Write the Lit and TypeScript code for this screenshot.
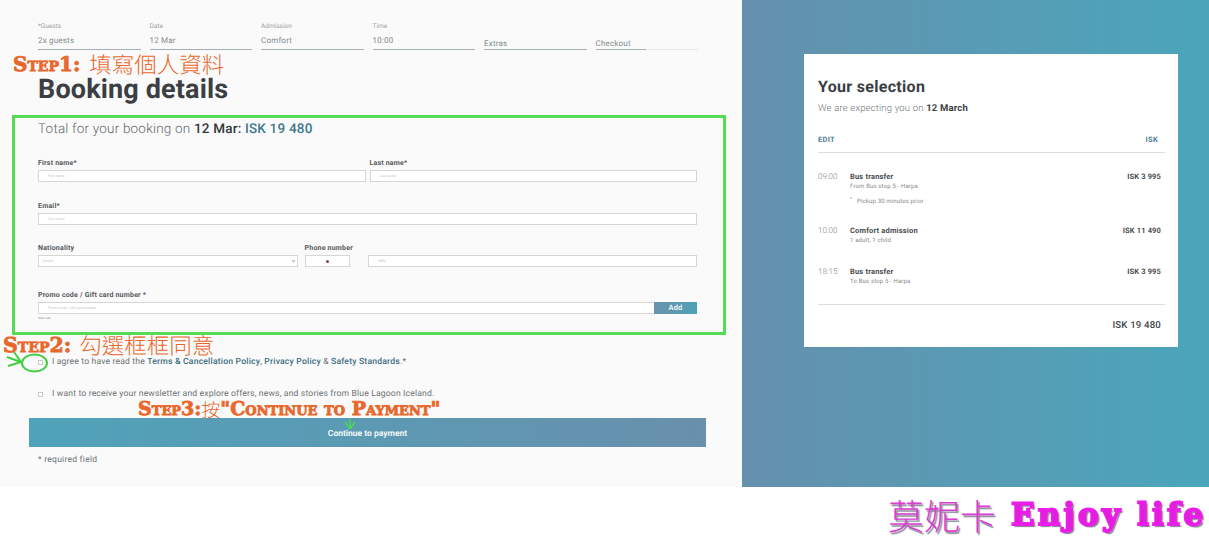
import { LitElement, html, css } from "lit";
import { customElement } from "lit/decorators.js";

const STEPS = [
  { label: "*Guests", value: "2x guests" },
  { label: "Date", value: "12 Mar" },
  { label: "Admission", value: "Comfort" },
  { label: "Time", value: "10:00" },
];

const ITEMS = [
  { time: "09:00", name: "Bus transfer", sub: "From Bus stop 5 - Harpa", note: "Pickup 30 minutes prior", price: "ISK 3 995", gap: "g1" },
  { time: "10:00", name: "Comfort admission", sub: "1 adult, 1 child", note: "", price: "ISK 11 490", gap: "g2" },
  { time: "18:15", name: "Bus transfer", sub: "To Bus stop 5 - Harpa", note: "", price: "ISK 3 995", gap: "g3" },
];

@customElement("app-root")
export class AppRoot extends LitElement {
  static styles = css`
    :host { display: block; width: 1209px; height: 541px; overflow: hidden; background: #fff; position: relative;
      font-family: Roboto, "Noto Sans", sans-serif; color: #3c4145; text-rendering: geometricPrecision; }
    * { box-sizing: border-box; }
    .top { display: flex; height: 487px; }
    .main { width: 742px; background: #fafafa; display: flex; flex-direction: column; }
    .steps { display: flex; gap: 9px; margin: 0 0 0 38px; padding-top: 23px; height: 50px; width: 660px; }
    .step { flex: 1; border-bottom: 1px solid #a3afb4; display: flex; flex-direction: column; justify-content: flex-end; position: relative; }
    .step .l { font-size: 6.5px; color: #9aa0a3; line-height: 8px; margin-bottom: 6px; }
    .step .v { font-size: 8px; color: #7f8a8e; line-height: 10px; margin-bottom: 3px; letter-spacing: .2px; }
    .step.t .v { margin-bottom: 0; }
    .step.last { border-bottom-color: #e6e8e9; }
    .step.last::after { content: ""; position: absolute; left: 0; bottom: -1px; width: 50px; height: 1px; background: #a3afb4; }
    h1 { font-size: 27px; font-weight: 700; color: #3b3f43; margin: 24px 0 0 38px; line-height: 30px; letter-spacing: .15px; height: 41px; }
    .box { margin-left: 12px; width: 714px; height: 220px; border: 3px solid #55dc55; padding: 0 26px 0 23px; display: flex; flex-direction: column; }
    .total { font-size: 13.5px; font-weight: 300; color: #62686c; line-height: 18px; margin-top: 2px; letter-spacing: .2px; }
    .total b { font-weight: 500; color: #33383c; }
    .total b.c { color: #40788c; }
    .row { display: flex; }
    .lbl { font-size: 7px; font-weight: 700; color: #55595c; line-height: 9px; letter-spacing: .2px; height: 9px; white-space: nowrap; }
    .inp { height: 12px; background: #fff; border: 1px solid #d6d6d6; font-size: 3.5px; color: #c4c4c4; line-height: 10px; padding-left: 9px; display: block; }
    .f { display: flex; flex-direction: column; gap: 2px; }
    .r1 { margin-top: 21px; gap: 4px; }
    .r1 .f { flex: 1; }
    .r2 { margin-top: 20px; }
    .r2 .f { width: 660px; }
    .r3 { margin-top: 19px; align-items: flex-end; }
    .nat { width: 260px; margin-right: 7px; }
    .nat .inp { position: relative; padding-left: 3px; }
    .nat .inp i { position: absolute; right: 2px; top: 3px; width: 3px; height: 3px; border-right: 1px solid #999; border-bottom: 1px solid #999; transform: rotate(45deg) scale(.8); }
    .ph { width: 45px; margin-right: 18px; }
    .ph .inp { display: flex; justify-content: center; align-items: center; padding: 0; }
    .ph .inp i { width: 3px; height: 3px; background: #8c3c54; border-radius: 50%; }
    .tel { width: 330px; }
    .tel .inp { padding-left: 9px; }
    .r4 { margin-top: 24px; }
    .r4 .f { width: 660px; gap: 2px; }
    .promo { display: flex; }
    .promo .inp { flex: 1; border-right: 0; }
    .add { width: 43px; height: 12px; background: linear-gradient(90deg, #6a92ad, #4fa2b6); color: #e8f2f5; font-size: 7.5px; font-weight: 700; text-align: center; line-height: 12px; letter-spacing: .2px; }
    .tiny { font-size: 3px; color: #888; line-height: 4px; height: 4px; }
    .check { display: flex; align-items: center; margin-left: 38px; font-size: 8.6px; color: #6d7276; height: 12px; letter-spacing: .16px; gap: 9px; white-space: nowrap; }
    .check i { width: 5px; height: 5px; border: 1px solid #c9c9c9; background: #fff; display: block; }
    .check b { font-weight: 500; color: #3d6d7e; letter-spacing: .2px; }
    .c1 { margin-top: 21px; }
    .c2 { margin-top: 20px; }
    .cta { margin: 18px 0 0 29px; width: 677px; height: 29px; background: linear-gradient(90deg, #4fa3b9, #6990ad); color: #f2f7f8; font-size: 8.5px; font-weight: 700; display: flex; align-items: center; justify-content: center; padding-top: 2px; }
    .req { margin: 8px 0 0 38px; font-size: 8.5px; color: #6d7276; line-height: 10px; letter-spacing: .25px; }
    .side { flex: 1; background: linear-gradient(90deg, #6590ad, #4ba6bb); padding: 54px 31px 0 62px; }
    .card { background: #fff; height: 293px; padding: 0 13px 0 14px; display: flex; flex-direction: column; }
    h2 { margin: 23px 0 0; font-size: 16px; font-weight: 700; color: #3a3e42; line-height: 19px; letter-spacing: .3px; }
    .exp { font-size: 9.5px; font-weight: 300; color: #6f7478; line-height: 12px; margin-top: 7px; letter-spacing: .18px; }
    .exp b { font-weight: 700; color: #3a3e42; }
    .bar { display: flex; justify-content: space-between; margin-top: 20px; height: 18px; border-bottom: 1px solid #dcdfe0; font-size: 7.5px; font-weight: 700; color: #4f8295; line-height: 10px; letter-spacing: .3px; padding-right: 7px; }
    .item { display: flex; }
    .item .tm { width: 32px; font-size: 8px; font-weight: 300; color: #80858a; line-height: 10px; }
    .item .bd { flex: 1; }
    .item .nm { font-size: 7.5px; font-weight: 700; color: #4a4e52; line-height: 10px; letter-spacing: .18px; }
    .item .sb { font-size: 6px; color: #84888b; line-height: 8px; margin-top: 1px; letter-spacing: .15px; }
    .item .nt { font-size: 6px; color: #84888b; line-height: 8px; margin-top: 7px; padding-left: 7px; letter-spacing: .15px; position: relative; }
    .item .nt::before { content: ""; position: absolute; left: 0; top: -1px; width: 2px; height: 2px; border-radius: 50%; background: #c8ccce; }
    .item .pr { font-size: 7.5px; font-weight: 700; color: #4a4e52; line-height: 10px; padding-right: 4px; letter-spacing: .15px; }
    .g1 { margin-top: 19px; height: 54px; }
    .g2 { height: 41px; }
    .g3 { height: 37px; }
    .sum { border-top: 1px solid #dcdfe0; padding: 14px 4px 0 0; text-align: right; font-size: 9.6px; font-weight: 500; color: #43474b; line-height: 14px; letter-spacing: .2px; }
    .wm { position: absolute; left: 888px; top: 493px; display: flex; align-items: center; gap: 15px; color: #e01fdc; white-space: nowrap; }
    .wm .cn { font-family: "Noto Sans CJK TC", sans-serif; font-size: 36px; font-weight: 300; line-height: 44px; color: #d93fd0; text-shadow: 1.5px 1.5px 1px #8a8a9c; }
    .wm .en { font-family: "DejaVu Serif", serif; font-size: 31px; font-weight: 700; line-height: 44px; -webkit-text-stroke: 2px #ea1cea; letter-spacing: 3.2px; text-shadow: 2px 2px 1px #7f7f90; }
    .note { position: absolute; white-space: nowrap; color: #e8682c; display: flex; align-items: center; line-height: 1; }
    .note .s { font-family: "DejaVu Serif", serif; font-weight: 700; font-variant: small-caps; -webkit-text-stroke: .8px #e8682c; }
    .note .z { font-family: "Noto Sans CJK TC", sans-serif; font-weight: 300; }
    .n1 { left: 13px; top: 52px; height: 24px; }
    .n1 .s { font-size: 20px; margin-right: 9px; }
    .n1 .z { font-size: 22.5px; }
    .n2 { left: 3px; top: 333px; height: 24px; }
    .n2 .s { font-size: 20.5px; margin-right: 8px; }
    .n2 .z { font-size: 22.5px; }
    .n3 { left: 138px; top: 398px; height: 22px; }
    .n3 .s { font-size: 19px; }
    .n3 .z { font-size: 19px; }
    .mark { position: absolute; left: 0; top: 0; pointer-events: none; }
  `;

  render() {
    return html`
      <div class="top">
        <div class="main">
          <div class="steps">
            ${STEPS.map((s) => html`<div class="step"><div class="l">${s.label}</div><div class="v">${s.value}</div></div>`)}
            <div class="step t"><div class="v">Extras</div></div>
            <div class="step t last"><div class="v">Checkout</div></div>
          </div>
          <h1>Booking details</h1>
          <div class="box">
            <div class="total">Total for your booking on <b>12 Mar:</b> <b class="c">ISK 19 480</b></div>
            <div class="row r1">
              <div class="f"><div class="lbl">First name*</div><div class="inp">First name</div></div>
              <div class="f"><div class="lbl">Last name*</div><div class="inp">Last name</div></div>
            </div>
            <div class="row r2"><div class="f"><div class="lbl">Email*</div><div class="inp">Your email</div></div></div>
            <div class="row r3">
              <div class="f nat"><div class="lbl">Nationality</div><div class="inp">Taiwan<i></i></div></div>
              <div class="f ph"><div class="lbl">Phone number</div><div class="inp"><i></i></div></div>
              <div class="f tel"><div class="inp">+886</div></div>
            </div>
            <div class="row r4">
              <div class="f">
                <div class="lbl">Promo code / Gift card number <span>*</span></div>
                <div class="promo"><div class="inp">Promo code / Gift card number</div><div class="add">Add</div></div>
                <div class="tiny">Add code</div>
              </div>
            </div>
          </div>
          <div class="check c1"><i></i><span>I agree to have read the <b>Terms &amp; Cancellation Policy</b>, <b>Privacy Policy</b> &amp; <b>Safety Standards</b>.*</span></div>
          <div class="check c2"><i></i><span>I want to receive your newsletter and explore offers, news, and stories from Blue Lagoon Iceland.</span></div>
          <div class="cta">Continue to payment</div>
          <div class="req">* required field</div>
        </div>
        <div class="side">
          <div class="card">
            <h2>Your selection</h2>
            <div class="exp">We are expecting you on <b>12 March</b></div>
            <div class="bar"><span>EDIT</span><span>ISK</span></div>
            ${ITEMS.map((it) => html`
              <div class="item ${it.gap}">
                <div class="tm">${it.time}</div>
                <div class="bd">
                  <div class="nm">${it.name}</div>
                  <div class="sb">${it.sub}</div>
                  ${it.note ? html`<div class="nt">${it.note}</div>` : ""}
                </div>
                <div class="pr">${it.price}</div>
              </div>`)}
            <div class="sum">ISK 19 480</div>
          </div>
        </div>
      </div>
      <div class="note n1"><span class="s">Step1:</span><span class="z">填寫個人資料</span></div>
      <div class="note n2"><span class="s">Step2:</span><span class="z">勾選框框同意</span></div>
      <div class="note n3"><span class="s">Step3:</span><span class="z">按</span><span class="s">"Continue to Payment"</span></div>
      <svg class="mark" width="1209" height="541" viewBox="0 0 1209 541" fill="none">
        <ellipse cx="34.5" cy="363" rx="12.5" ry="8.5" stroke="#3fcf3f" stroke-width="2"></ellipse>
        <path d="M14 352 L21 362 L8 366 M7 357 L21 362" stroke="#3fcf3f" stroke-width="2"></path>
        <path d="M350 419 V428 M345 422 L350 429 L355 422" stroke="#45e045" stroke-width="1.3"></path>
      </svg>
      <div class="wm"><span class="cn">莫妮卡</span><span class="en">Enjoy life</span></div>
    `;
  }
}
